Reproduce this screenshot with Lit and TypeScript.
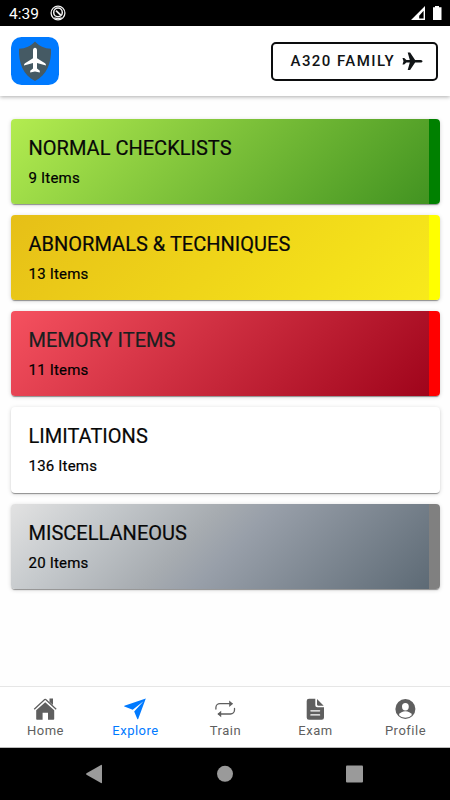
import { LitElement, html, css, svg } from "lit";
import { customElement, property } from "lit/decorators.js";

interface Category { title: string; items: number; tone: string; }

const CATEGORIES: Category[] = [
  { title: "NORMAL CHECKLISTS", items: 9, tone: "green" },
  { title: "ABNORMALS & TECHNIQUES", items: 13, tone: "yellow" },
  { title: "MEMORY ITEMS", items: 11, tone: "red" },
  { title: "LIMITATIONS", items: 136, tone: "plain" },
  { title: "MISCELLANEOUS", items: 20, tone: "gray" },
];

const ICONS: Record<string, unknown> = {
  Home: svg`<path d="M1.200 12.200 11.700 2.600a.8.8 0 0 1 1 0L23.200 12.200" fill="none" stroke="currentColor" stroke-width="1.300"/><path d="M16.500 1.600h3.500v6.400l-3.500-3zM12.200 5.200l9 8v8.800a.8.8 0 0 1-.8.800H15v-7H9.600v7H4a.8.8 0 0 1-.8-.8v-8.800z"/>`,
  Explore: svg`<path d="M22.800 1.400 15.200 22a.5.500 0 0 1-.9 0L11.200 14.400l9.300-10.200L9.700 12.700 1.400 9.600a.5.500 0 0 1 0-.9z"/>`,
  Train: svg`<path d="M2.900 12.100v-1.500a4 4 0 0 1 4-3.900h12M21.500 11.500v1.600a4 4 0 0 1-4 3.900h-12" fill="none" stroke="currentColor" stroke-width="1.300" stroke-linecap="round"/><path d="M16.200 3.400 20 6.700 16.200 10zM8.200 13.700 4.400 17l3.800 3.300z"/>`,
  Exam: svg`<path d="M12.300 1.700v6.500a2 2 0 0 0 2 2H21v10.200a2.300 2.300 0 0 1-2.300 2.300H6a2.300 2.300 0 0 1-2.300-2.300V4A2.300 2.300 0 0 1 6 1.700z"/><path d="M14 2 20.700 8.700h-5.600A1.100 1.100 0 0 1 14 7.600z"/><path d="M7.900 13.800h8.700M7.900 17.900h8.700" stroke="#fff" stroke-width="1.300" stroke-linecap="round"/>`,
  Profile: svg`<circle cx="12.400" cy="12" r="10"/><ellipse cx="12.400" cy="9.700" rx="3.400" ry="3.700" fill="#fff"/><path d="M5.800 17.900c1.300-2.400 3.800-3.600 6.600-3.600s5.300 1.200 6.600 3.600a8.900 8.900 0 0 1-13.200 0z" fill="#fff"/>`,
};

@customElement("checklist-card")
class ChecklistCard extends LitElement {
  @property({ attribute: false }) category!: Category;

  static styles = css`
    :host { display: block; }
    .card {
      box-sizing: border-box; height: 85.200px; padding: 17px 0 0 17.500px;
      border-radius: 4px; border-right: 11px solid transparent;
      box-shadow: 0 2px 1px -1px rgba(0,0,0,.26), 0 1px 1px rgba(0,0,0,.16), 0 1px 4px rgba(0,0,0,.16);
      background-clip: padding-box; color: #080808;
    }
    .title { font-size: 20px; line-height: 24px; letter-spacing: .02px; font-weight: 400; -webkit-text-stroke: .2px currentColor; white-space: nowrap; }
    .count { margin-top: 9px; font-size: 15px; line-height: 18px; letter-spacing: .2px; font-weight: 400; -webkit-text-stroke: .2px currentColor; color: #000; }
    .green { background-image: linear-gradient(135deg, #b3ec50, #429321); border-color: #008000; }
    .yellow { background-image: linear-gradient(135deg, #e6bf17, #f8ea1b); border-color: #ff0; }
    .red { background-image: linear-gradient(135deg, #f5515f, #9f041b); border-color: #f00; }
    .red .title { color: #17201f; }
    .plain { background: #fff; border-color: #fff; }
    .gray { background-image: linear-gradient(135deg, #e2e2e2, #c5c9cc 20%, #a6abb0 43%, #989fa9 53%, #5d6a75); border-color: #808080; }
  `;

  render() {
    const c = this.category;
    return html`<div class="card ${c.tone}">
      <div class="title">${c.title}</div>
      <div class="count">${c.items} Items</div>
    </div>`;
  }
}

@customElement("app-root")
class AppRoot extends LitElement {
  static styles = css`
    :host { display: flex; flex-direction: column; width: 450px; height: 800px; overflow: hidden; background: #fefefe; font-family: Roboto, "Liberation Sans", sans-serif; }
    svg { display: block; fill: currentColor; }
    .status { flex: none; display: flex; align-items: center; height: 26px; box-sizing: border-box; padding: 0 7px 0 9px; background: #000; color: #fff; font-size: 15.500px; line-height: 26px; }
    .status .clock { width: 41px; padding-top: 1px; }
    .status .signals { margin-left: auto; }
    .header { flex: none; display: flex; align-items: center; justify-content: space-between; height: 70px; box-sizing: border-box; padding: 0 12px 0 11px; background: #fff; box-shadow: 0 1px 4px rgba(0,0,0,.32); }
    .family { display: flex; align-items: center; gap: 6.500px; box-sizing: border-box; width: 167px; height: 39px; padding: 0 0 0 17.500px; border: 2px solid #0c0d0e; border-radius: 5px; color: #111416; font-size: 15px; font-weight: 500; letter-spacing: 1.430px; white-space: nowrap; }
    .list { flex: 1; display: flex; flex-direction: column; gap: 11.100px; padding: 22.600px 10px 0 11px; }
    .tabs { flex: none; display: flex; height: 62px; box-sizing: border-box; border-top: 1px solid #e6e6e6; border-bottom: 1px solid #bbb; background: #fff; }
    .tab { flex: 1; display: flex; flex-direction: column; align-items: center; padding-top: 10px; gap: 1px; color: #5f5f5f; font-size: 13px; line-height: 18px; letter-spacing: .5px; }
    .tab svg { flex: none; }
    .tab span { padding-left: 1px; }
    .active { color: #007aff; }
    .navbar { flex: none; display: flex; align-items: center; height: 52px; background: #000; color: #9a9a9a; }
  `;

  render() {
    return html`
      <div class="status">
        <span class="clock">4:39</span>
        <svg width="16" height="16" viewBox="0 0 16 16"><circle cx="8" cy="8" r="6.900" fill="none" stroke="#f1f1f1" stroke-width="1.300"/><circle cx="8" cy="7.400" r="4.300" fill="none" stroke="#f1f1f1" stroke-width="1.500"/><path d="m6 5.700 5 4.600" stroke="#f1f1f1" stroke-width="1.700"/><path d="M4.300 12.700q3.700 1.600 7.400 0" fill="none" stroke="#f1f1f1" stroke-width="1.200"/></svg>
        <svg class="signals" width="32" height="16" viewBox="0 0 32 16"><path d="M14 1v14H0zM12.600 5.800l-4.400 5v2.800h4.400z" fill-rule="evenodd"/><path d="M22 2.300h2V1h4v1.300h2.500V15H22z"/></svg>
      </div>
      <div class="header">
        <svg width="48" height="48" viewBox="0 0 48 48">
          <rect width="48" height="48" rx="10.500" fill="#007aff"/>
          <path d="M24 4.500c4 4.300 9.500 7.200 16 7.200.7 13.800-4.300 26.500-16 32.300C12.300 38.200 7.300 25.500 8 11.700 14.500 11.700 20 8.800 24 4.500z" fill="#455a64"/>
          <path d="M24 10.800c1.200 0 2 1 2 2.600v7.800l8 5c.7.500 1 1.100 1 2.400l-9-2.700v5.600l2.800 2.200v1.700L24 34.500l-4.800.9v-1.700l2.800-2.200v-5.600l-9 2.700c0-1.300.3-1.900 1-2.400l8-5v-7.800c0-1.600.8-2.600 2-2.600z" fill="#fff"/>
        </svg>
        <div class="family"><span>A320 FAMILY</span>
          <svg width="21" height="19" viewBox="0 0 21 19"><path d="M.5 6h1.700l2.200 2.100h3.400L5.700.6h2.400l5 7.400h5c1.600 0 2.400.7 2.400 1.300s-.8 1.300-2.400 1.300h-5l-5 7.400H5.700l2.100-7.500H4.400l-2.200 2.100H.5l1-3.300z"/></svg>
        </div>
      </div>
      <div class="list">${CATEGORIES.map((c) => html`<checklist-card .category=${c}></checklist-card>`)}</div>
      <div class="tabs">${Object.keys(ICONS).map((name) => html`<div class="tab ${name === "Explore" ? "active" : ""}"><svg width="24" height="24" viewBox="0 0 24 24">${ICONS[name]}</svg><span>${name}</span></div>`)}</div>
      <div class="navbar">
        <svg width="450" height="52" viewBox="0 0 450 52"><path d="M102 17.500v17q0 1-1 .500l-14.500-8.300q-1-.7 0-1.400L101 17q1-.5 1 .5z"/><circle cx="225" cy="25.800" r="8"/><rect x="346" y="17.500" width="17" height="17" rx="1"/></svg>
      </div>`;
  }
}
